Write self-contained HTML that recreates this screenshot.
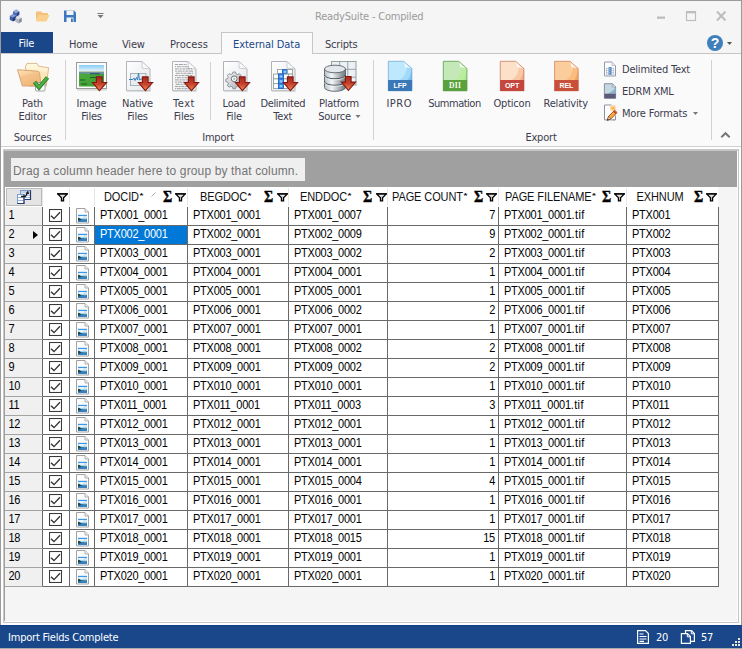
<!DOCTYPE html>
<html><head><meta charset="utf-8"><title>ReadySuite - Compiled</title>
<style>
html,body{margin:0;padding:0;}
body{width:742px;height:649px;overflow:hidden;background:#f5f5f5;position:relative;font-family:"DejaVu Sans Condensed","DejaVu Sans","Liberation Sans",sans-serif;font-size:11px;color:#3c3c4e;}
.abs{position:absolute;}
#win{position:absolute;left:0;top:0;width:740px;height:647px;border:1px solid #9b9b9b;pointer-events:none;z-index:50;}
.t{position:absolute;line-height:13px;white-space:nowrap;letter-spacing:-0.2px;}
.ct{position:absolute;line-height:13px;white-space:nowrap;text-align:center;width:100px;margin-left:-50px;letter-spacing:-0.2px;}
#title{left:315px;top:10px;color:#9a9a9a;}
#file{left:1px;top:32px;width:52px;height:22px;background:#19478a;}
#tabline{left:1px;top:53px;width:740px;height:1px;background:#c6c6c6;}
#acttab{left:221px;top:32px;width:90px;height:21px;border:1px solid #c6c6c6;border-bottom:none;background:#fafafa;height:22px;}
#ribbon{left:1px;top:54px;width:740px;height:92px;background:#fafafa;}
#ribline{left:1px;top:146px;width:740px;height:1px;background:#cfcfcf;}
.sep{position:absolute;top:60px;width:1px;height:80px;background:#d2d2d2;}
/* grid */
#formbg{left:1px;top:147px;width:740px;height:478px;background:#fff;}
#gridouter{left:3px;top:149px;width:736px;height:474px;background:#c6c6c6;}
#gridwhite{left:4px;top:151px;width:734px;height:471px;background:#fff;}
#gridinner{left:4px;top:151px;width:733px;height:470px;background:#a0a0a0;}
#gridbg{left:5px;top:187px;width:732px;height:434px;background:#f5f5f5;}
#panel{left:4px;top:151px;width:733px;height:36px;background:#a0a0a0;}
#gbox{left:11px;top:158px;width:294px;height:23px;background:#efefef;}
#gtext{left:13px;top:164px;font-family:"Liberation Sans",sans-serif;font-size:12px;color:#747474;line-height:14px;letter-spacing:0.140px;}
#hdr{left:5px;top:187px;width:713px;height:20px;background:#fff;}
.g{font-family:"Liberation Sans",sans-serif;font-size:11px;color:#000;}
.h{position:absolute;top:191px;line-height:13px;transform:scaleY(1.13);transform-origin:0 10.300px;letter-spacing:-0.1px;white-space:nowrap;font-family:"Liberation Sans",sans-serif;font-size:11px;color:#111;}
.as{font-size:10px;font-weight:bold;position:relative;top:-0.400px;left:0.500px;letter-spacing:0;line-height:13px;display:inline-block;vertical-align:top;transform:scaleY(0.700);transform-origin:0 2px;}
.s{display:inline-block;line-height:16px;transform:scaleY(1.13);transform-origin:0 11.800px;}
.sg{position:absolute;top:187.400px;font:bold 17px/20px "Liberation Serif",serif;color:#000;-webkit-text-stroke:0.400px #000;transform:scaleX(0.830);transform-origin:0 0;}
.fn{position:absolute;top:192.500px;}
.hs{position:absolute;top:188px;width:1px;height:18px;background:#e6e6e6;}
.row{position:absolute;left:5px;width:714px;height:19px;font-family:"Liberation Sans",sans-serif;font-size:11px;color:#000;}
.c{position:absolute;top:1px;height:19px;line-height:16px;box-sizing:border-box;border-right:1px solid #696969;border-bottom:1px solid #696969;background:#fff;white-space:nowrap;overflow:hidden;letter-spacing:-0.25px;padding-top:0px;}
.rh{left:0;width:38px;background:#f0f0f0;border-bottom:1px solid #a4a4a4;padding-left:3.500px;}
.ck{left:38px;width:27px;}
.ic{left:65px;width:25px;}
.c1{left:90px;width:93px;padding-left:5px;}
.c2{left:183px;width:101px;padding-left:5px;}
.c3{left:284px;width:99px;padding-left:5px;}
.c4{left:383px;width:111px;text-align:right;padding-right:3px;}
.c5{left:494px;width:128px;padding-left:5px;}
.c6{left:622px;width:92px;padding-left:5px;}
.sel{background:#0078d7;color:#fff;}
.ck svg{position:absolute;left:6px;top:2px;}
.ic svg{position:absolute;left:6px;top:1px;}
.cur{position:absolute;left:28px;top:5px;width:0;height:0;border-left:5px solid #000;border-top:4.5px solid transparent;border-bottom:4.5px solid transparent;}
#status{left:0px;top:625px;width:742px;height:23px;background:#19478a;border-top:1px solid #123f82;box-sizing:border-box;z-index:60;}
#botline{left:0;top:648px;width:742px;height:1px;background:#aaa;z-index:60;}
#status .t{color:#fff;}
</style></head>
<body>
<svg width="0" height="0" style="position:absolute">
<defs>
<linearGradient id="ra" x1="0" y1="0" x2="0" y2="1"><stop offset="0" stop-color="#a62a1e"/><stop offset="0.550" stop-color="#c8452f"/><stop offset="0.850" stop-color="#e87848"/><stop offset="1" stop-color="#f8c070"/></linearGradient>
<linearGradient id="pg" x1="0" y1="0" x2="1" y2="1"><stop offset="0" stop-color="#ffffff"/><stop offset="1" stop-color="#e4e6ea"/></linearGradient>
<g id="imgdoc"><path d="M0.500 0.500 H9 L12.500 4 V15 H0.500 Z" fill="#fdfdfd" stroke="#a2a2a2"/><path d="M9 0.500 V4 H12.500" fill="#f0f0f0" stroke="#a8a8a8" stroke-width="0.900"/><rect x="2" y="6.800" width="9" height="7.200" fill="#3d96e8"/><rect x="2" y="8" width="9" height="3" fill="#c8e8f8"/><rect x="3.500" y="8.300" width="4" height="1.400" fill="#f4fbff"/><rect x="2" y="10.800" width="9" height="3.200" fill="#3480c4"/><path d="M2 9.800 L4 10.300 L5.500 12 L2 12.800 Z" fill="#24463a"/><rect x="8" y="11.200" width="2" height="0.800" fill="#6a9a7a"/></g>
<linearGradient id="fg" x1="0" y1="0" x2="0" y2="1"><stop offset="0" stop-color="#ffffff"/><stop offset="1" stop-color="#8c8c8c"/></linearGradient>
<g id="funnel"><path d="M0.800 0.900 H10.200 L6.600 4.800 V7.800 H4.400 V4.800 Z" fill="url(#fg)" stroke="#000" stroke-width="1.200"/><rect x="0.200" y="0.300" width="10.600" height="1.200" fill="#000"/></g>
<g id="arrow"><path d="M20.400 15.900 H26.100 V21.500 H30.600 L23.400 29.700 L16.400 21.500 H20.400 Z" fill="url(#ra)" stroke="#861810" stroke-width="1.100"/></g>
<g id="page"><path d="M4.5 1.5 H21 L28 8.5 V30.5 H4.5 Z" fill="url(#pg)" stroke="#b8bcc2"/><path d="M21 1.5 V8.5 H28 Z" fill="#f4f4f6" stroke="#c4c8cc" stroke-width="0.8"/></g>
</defs></svg>

<!-- title bar -->
<div class="t" id="title">ReadySuite - Compiled</div>
<svg class="abs" style="left:0;top:0" width="742" height="54" viewBox="0 0 742 54">
  <!-- app icon -->
<g><path d="M13.0 11.24 L16.2 9.18 L19.4 11.24 L16.2 13 Z" fill="#8fa8e0"/><path d="M13.0 11.24 L16.2 13 V16.8 L13.0 15.040000000000001 Z" fill="#4a68b4"/><path d="M19.4 11.24 L16.2 13 V16.8 L19.4 15.040000000000001 Z" fill="#2a4690"/><path d="M9.8 15.840000000000002 L13 13.780000000000001 L16.2 15.840000000000002 L13 17.6 Z" fill="#7e98d4"/><path d="M9.8 15.840000000000002 L13 17.6 V21.400000000000002 L9.8 19.64 Z" fill="#3c5aa6"/><path d="M16.2 15.840000000000002 L13 17.6 V21.400000000000002 L16.2 19.64 Z" fill="#22397e"/><path d="M15.400000000000002 17.84 L18.6 15.780000000000001 L21.8 17.84 L18.6 19.6 Z" fill="#dcdfe6"/><path d="M15.400000000000002 17.84 L18.6 19.6 V23.400000000000002 L15.400000000000002 21.64 Z" fill="#b4b8c2"/><path d="M21.8 17.84 L18.6 19.6 V23.400000000000002 L21.8 21.64 Z" fill="#8c909c"/></g>
  <!-- open folder -->
  <path d="M36 11.500 h5 l1.500 1.500 h5.500 v2 h-9 l-3 6 z" fill="#f6c27a"/><path d="M39 15 h10.500 l-3 6.500 h-10.500 z" fill="#fad08f"/>
  <!-- save -->
  <path d="M64 10.500 h10 l2 2 v9.500 h-12 z" fill="#3b78bf"/><rect x="66.500" y="10.500" width="7" height="4.500" fill="#f4f4f4"/><rect x="66.500" y="17.500" width="7" height="4.500" fill="#f4f4f4"/><rect x="71" y="18.500" width="1.800" height="3.500" fill="#3b78bf"/>
  <!-- qat dropdown -->
  <rect x="97.500" y="13" width="6" height="1" fill="#777"/><path d="M97.500 15 h6 l-3 3.200 z" fill="#777"/>
  <!-- window buttons -->
  <rect x="657" y="16.500" width="8" height="2.300" fill="#bdbdbd"/>
  <rect x="686.500" y="12" width="9" height="8.500" fill="none" stroke="#bdbdbd" stroke-width="1.200"/><rect x="686" y="11" width="10" height="2.300" fill="#bdbdbd"/>
  <path d="M717 11.500 l8.500 9 M725.500 11.500 l-8.500 9" stroke="#bdbdbd" stroke-width="2" fill="none"/>
  <!-- help -->
  <circle cx="715" cy="43" r="8" fill="#3f7fbc"/>
  <text x="715" y="48" text-anchor="middle" font-family="Liberation Sans, sans-serif" font-weight="bold" font-size="14" fill="#fff">?</text>
  <path d="M727 42 h5 l-2.500 3 z" fill="#555"/>
</svg>

<!-- tabs -->
<div class="abs" id="file"></div>
<div class="abs" id="tabline"></div>
<div class="abs" id="acttab"></div>
<div class="t" style="left:18.500px;top:37px;color:#fff">File</div>
<div class="t" style="left:69px;top:38px">Home</div>
<div class="t" style="left:122px;top:38px">View</div>
<div class="t" style="left:170px;top:38px;letter-spacing:0.050px">Process</div>
<div class="t" style="left:233px;top:38px;color:#19478a;letter-spacing:-0.050px">External Data</div>
<div class="t" style="left:325px;top:38px">Scripts</div>

<!-- ribbon -->
<div class="abs" id="ribbon"></div>
<div class="abs" id="ribline"></div>
<div class="sep" style="left:65px"></div>
<div class="sep" style="left:210px;top:62px;height:58px"></div>
<div class="sep" style="left:373px"></div>
<div class="sep" style="left:711px"></div>

<svg class="abs" style="left:0;top:54px" width="742" height="92" viewBox="0 54 742 92">
<defs>
<linearGradient id="fb" x1="0" y1="0" x2="0" y2="1"><stop offset="0" stop-color="#fffbe0"/><stop offset="1" stop-color="#f6d9a8"/></linearGradient>
<linearGradient id="ff" x1="0" y1="0" x2="0.600" y2="1"><stop offset="0" stop-color="#fde2b4"/><stop offset="1" stop-color="#efb678"/></linearGradient>
<linearGradient id="sky" x1="0" y1="0" x2="0" y2="1"><stop offset="0" stop-color="#86ccf6"/><stop offset="1" stop-color="#e6f3fb"/></linearGradient>
<linearGradient id="grs" x1="0" y1="0" x2="1" y2="1"><stop offset="0" stop-color="#52b040"/><stop offset="1" stop-color="#3a9a32"/></linearGradient>
<linearGradient id="cyl" x1="0" y1="0" x2="1" y2="0"><stop offset="0" stop-color="#b8c0c6"/><stop offset="0.350" stop-color="#f4f6f8"/><stop offset="1" stop-color="#6c767e"/></linearGradient>
<radialGradient id="lfp" cx="0.250" cy="0.150" r="0.950" gradientUnits="objectBoundingBox"><stop offset="0" stop-color="#bde8fd"/><stop offset="0.550" stop-color="#bde8fd"/><stop offset="0.580" stop-color="#a2d8fa"/><stop offset="0.780" stop-color="#a2d8fa"/><stop offset="0.810" stop-color="#7cc0f4"/><stop offset="1" stop-color="#7cc0f4"/></radialGradient>
<radialGradient id="dii" cx="0.250" cy="0.150" r="0.950" gradientUnits="objectBoundingBox"><stop offset="0" stop-color="#c4e8b8"/><stop offset="0.550" stop-color="#c4e8b8"/><stop offset="0.580" stop-color="#b8ee9e"/><stop offset="0.780" stop-color="#b8ee9e"/><stop offset="0.810" stop-color="#aee894"/><stop offset="1" stop-color="#aee894"/></radialGradient>
<radialGradient id="opt" cx="0.250" cy="0.150" r="0.950" gradientUnits="objectBoundingBox"><stop offset="0" stop-color="#fde0c8"/><stop offset="0.550" stop-color="#fde0c8"/><stop offset="0.580" stop-color="#f8c8a4"/><stop offset="0.780" stop-color="#f8c8a4"/><stop offset="0.810" stop-color="#f0b088"/><stop offset="1" stop-color="#f0b088"/></radialGradient>
<radialGradient id="rel" cx="0.250" cy="0.150" r="0.950" gradientUnits="objectBoundingBox"><stop offset="0" stop-color="#fbcc9c"/><stop offset="0.550" stop-color="#fbcc9c"/><stop offset="0.580" stop-color="#fcbc80"/><stop offset="0.780" stop-color="#fcbc80"/><stop offset="0.810" stop-color="#f4a860"/><stop offset="1" stop-color="#f4a860"/></radialGradient>
<linearGradient id="gear" x1="0" y1="0" x2="1" y2="1"><stop offset="0" stop-color="#f6f7f8"/><stop offset="1" stop-color="#a4aab0"/></linearGradient>
<g id="doc"><path d="M0.500 0.500 H15.800 L24 7.800 V29.700 H0.500 Z" fill="url(#pg)" stroke="#b0b4ba"/><path d="M15.800 0.500 L16.300 7.300 L24 7.800 Z" fill="#fbfbfc" stroke="#c0c4c8" stroke-width="0.800"/><path d="M1 30.300 H24.500" stroke="#d8d8d8" stroke-width="1"/></g>
<g id="xdoc"><path d="M0.300 0.300 H15.700 L23.900 7.500 V29.800 H0.300 Z"/></g>
</defs>
<!-- Path editor -->
<path d="M25.300 67 L27 63.400 H37 L38.500 66.200 L48.600 67.800 L46.300 86 H29 Z" fill="url(#fb)" stroke="#dca878" stroke-width="0.800"/>
<path d="M31 70.500 L47.300 72 L45.300 86 H31 Z" fill="#fbe6bc"/>
<path d="M17.500 69.700 L37.300 71.200 Q39.300 71.400 39.600 73.300 L41 86 H22.300 Z" fill="url(#ff)" stroke="#cf9262" stroke-width="0.800"/>
<path d="M20 76 L36 72 L39.500 74 L40.500 82 L24 86 L22.500 86 Z" fill="#f2b87c" opacity="0.450"/>
<rect x="35.500" y="82.500" width="9.500" height="8.500" rx="1" fill="#fff" stroke="#8a8a8a" stroke-width="0.800"/>
<path d="M34.500 82 L39 87.500 L47.500 77.500" fill="none" stroke="#2c7a28" stroke-width="4.200" stroke-linejoin="miter"/>
<path d="M34.800 82.200 L39 87.300 L47.300 77.700" fill="none" stroke="#4cae44" stroke-width="2.600" stroke-linejoin="miter"/>
<!-- Image files -->
<rect x="77" y="89" width="30" height="1.800" fill="#dedede"/>
<rect x="76.500" y="62.500" width="30" height="26" fill="#fcfcfc" stroke="#9a9a9a"/>
<rect x="79" y="65" width="25" height="21.500" fill="url(#grs)"/>
<rect x="79" y="65" width="25" height="6.500" fill="url(#sky)"/>
<rect x="79" y="71.300" width="25" height="1" fill="#cfcdbe"/><path d="M79 72.300 H104 V74 L92 74 L79 73.500 Z" fill="#6c8eaa"/><path d="M90 73.300 H100 V74.300 H90 Z" fill="#2c4a7a"/>
<path d="M80 80 h5 M81 84 h6 M90 77.500 h6" stroke="#1e5a22" stroke-width="1"/>
<use href="#arrow" x="76" y="61"/>
<!-- Native files -->
<use href="#doc" x="126" y="61"/>
<rect x="130.500" y="73.500" width="15.500" height="12" fill="#e6eef0" stroke="#a8b4b8"/>
<path d="M129 79.500 H133 L134 78 L135 80.500 L136.500 77.500 L137.500 80 L138.500 73 L139.500 80 L141 79 H146" fill="none" stroke="#3a80c4" stroke-width="1"/>
<use href="#arrow" x="122" y="61"/>
<!-- Text files -->
<use href="#doc" x="172" y="61"/>
<g stroke="#8c8c8c" stroke-width="0.800" stroke-dasharray="3 0.800 4 0.800 2 0.800">
<path d="M175 64.500 H187"/><path d="M175 66.700 H189" stroke-dashoffset="2"/><path d="M175 68.900 H192" stroke-dashoffset="4"/><path d="M175 71.100 H193" stroke-dashoffset="1"/><path d="M175 73.300 H193" stroke-dashoffset="3"/><path d="M175 75.500 H193" stroke-dashoffset="5"/><path d="M175 77.700 H190" stroke-dashoffset="2"/><path d="M175 79.900 H193" stroke-dashoffset="4"/><path d="M175 82.100 H193" stroke-dashoffset="1"/><path d="M175 84.300 H193" stroke-dashoffset="3"/><path d="M175 86.500 H193" stroke-dashoffset="5"/><path d="M175 88.700 H190" stroke-dashoffset="2"/>
</g>
<use href="#arrow" x="168" y="61"/>
<!-- Load file -->
<use href="#doc" x="223" y="61"/>
<g transform="translate(234.200 78.800) scale(0.800)">
<path d="M-1.600 -8.500 h3.200 l0.600 2.300 l2 0.900 l2.100 -1.200 l2.200 2.200 l-1.200 2.100 l0.900 2 l2.300 0.600 v3.200 l-2.300 0.600 l-0.900 2 l1.200 2.100 l-2.200 2.200 l-2.100 -1.200 l-2 0.900 l-0.600 2.300 h-3.200 l-0.600 -2.300 l-2 -0.900 l-2.100 1.200 l-2.200 -2.200 l1.200 -2.100 l-0.900 -2 l-2.300 -0.600 v-3.200 l2.300 -0.600 l0.900 -2 l-1.200 -2.100 l2.200 -2.200 l2.100 1.200 l2 -0.900 z" fill="url(#gear)" stroke="#7c838a" stroke-width="1"/>
<circle r="3.600" fill="#fdfdfd" stroke="#5c6268" stroke-width="1.100"/><circle r="1.500" fill="#b8bec4"/>
</g>
<use href="#arrow" x="219" y="61"/>
<!-- Delimited text -->
<use href="#doc" x="271" y="61"/>
<rect x="277.5" y="69.5" width="5" height="4.6" fill="#fff" stroke="#93a29e" stroke-width="0.900"/>
<rect x="277.5" y="74.1" width="5" height="4.8" fill="#fff" stroke="#93a29e" stroke-width="0.900"/>
<rect x="282.5" y="69.5" width="5" height="4.6" fill="#3f8ee8" stroke="#2468c0" stroke-width="0.900"/><rect x="283.8" y="70.8" width="2.4" height="2.0" fill="#8ccafc"/>
<rect x="282.5" y="74.1" width="5" height="4.8" fill="#3f8ee8" stroke="#2468c0" stroke-width="0.900"/><rect x="283.8" y="75.39999999999999" width="2.4" height="2.2" fill="#8ccafc"/>
<rect x="287.5" y="69.5" width="5" height="4.6" fill="#fff" stroke="#93a29e" stroke-width="0.900"/>
<rect x="287.5" y="74.1" width="5" height="4.8" fill="#fff" stroke="#93a29e" stroke-width="0.900"/>
<rect x="273.5" y="74.1" width="5" height="4.8" fill="#fff" stroke="#93a29e" stroke-width="0.900"/>
<rect x="278.5" y="74.1" width="5" height="4.8" fill="#3f8ee8" stroke="#2468c0" stroke-width="0.900"/><rect x="279.8" y="75.39999999999999" width="2.4" height="2.2" fill="#8ccafc"/>
<rect x="283.5" y="74.1" width="5" height="4.8" fill="#fff" stroke="#93a29e" stroke-width="0.900"/>
<rect x="273.5" y="78.9" width="5" height="4.8" fill="#fff" stroke="#93a29e" stroke-width="0.900"/>
<rect x="278.5" y="78.9" width="5" height="4.8" fill="#3f8ee8" stroke="#2468c0" stroke-width="0.900"/><rect x="279.8" y="80.2" width="2.4" height="2.2" fill="#8ccafc"/>
<rect x="283.5" y="78.9" width="5" height="4.8" fill="#fff" stroke="#93a29e" stroke-width="0.900"/>
<rect x="273.5" y="83.7" width="5" height="4.8" fill="#fff" stroke="#93a29e" stroke-width="0.900"/>
<rect x="278.5" y="83.7" width="5" height="4.8" fill="#3f8ee8" stroke="#2468c0" stroke-width="0.900"/><rect x="279.8" y="85.0" width="2.4" height="2.2" fill="#8ccafc"/>
<rect x="283.5" y="83.7" width="5" height="4.8" fill="#fff" stroke="#93a29e" stroke-width="0.900"/>
<rect x="278.5" y="74.1" width="5" height="4.8" fill="#3f8ee8" stroke="#2468c0" stroke-width="0.900"/><rect x="279.8" y="75.39999999999999" width="2.4" height="2.2" fill="#8ccafc"/>
<rect x="278.5" y="78.9" width="5" height="4.8" fill="#3f8ee8" stroke="#2468c0" stroke-width="0.900"/><rect x="279.8" y="80.2" width="2.4" height="2.2" fill="#8ccafc"/>
<rect x="278.5" y="83.7" width="5" height="4.8" fill="#3f8ee8" stroke="#2468c0" stroke-width="0.900"/><rect x="279.8" y="85.0" width="2.4" height="2.2" fill="#8ccafc"/>
<use href="#arrow" x="267" y="61"/>
<!-- Platform source -->
<rect x="331.500" y="61.500" width="24.500" height="23.500" fill="#eef0f8" stroke="#94a49c"/>
<path d="M339.700 61.500 V85 M347.800 61.500 V85 M331.500 69.300 H356 M331.500 77.200 H356" stroke="#94a49c" stroke-width="1"/>
<path d="M324.500 69 V87.500 A10.500 3.800 0 0 0 345.500 87.500 V69 Z" fill="url(#cyl)" stroke="#5a646c" stroke-width="0.900"/>
<ellipse cx="335" cy="69" rx="10.500" ry="3.800" fill="#e4e8ec" stroke="#5a646c" stroke-width="0.900"/>
<path d="M324.500 75 A10.500 3.800 0 0 0 345.500 75 M324.500 81.500 A10.500 3.800 0 0 0 345.500 81.500" fill="none" stroke="#4a545c" stroke-width="1.100"/>
<path d="M324.500 76 A10.500 3.800 0 0 0 345.500 76 M324.500 82.500 A10.500 3.800 0 0 0 345.500 82.500" fill="none" stroke="#f4f6f8" stroke-width="0.700"/>
<use href="#arrow" x="325" y="60.600"/>
<!-- export docs -->
<g transform="translate(388 61)"><use href="#xdoc" fill="url(#lfp)" stroke="#5a96c8" stroke-width="0.600"/><path d="M0.100 19 H24.100 V30 H0.100 Z" fill="#3a78b8"/><path d="M16.200 1.500 L17 6.300 L22.500 7 Z" fill="#eef8ff"/><text x="12.100" y="26.700" text-anchor="middle" font-family="Liberation Sans, sans-serif" font-weight="bold" font-size="7" fill="#fff">LFP</text></g>
<g transform="translate(443 61)"><use href="#xdoc" fill="url(#dii)" stroke="#5c9c48" stroke-width="0.800"/><path d="M0.100 19 H24.100 V30 H0.100 Z" fill="#5aa03c"/><path d="M16.200 1.500 L17 6.300 L22.500 7 Z" fill="#f4fcee"/><text x="12.100" y="26.700" text-anchor="middle" font-family="Liberation Serif, serif" font-weight="bold" font-size="7.600" letter-spacing="0.300" fill="#f6fff2">DII</text></g>
<g transform="translate(500 61)"><use href="#xdoc" fill="url(#opt)" stroke="#c4705c" stroke-width="0.700"/><path d="M0.100 19 H24.100 V30 H0.100 Z" fill="#c4463c"/><path d="M16.200 1.500 L17 6.300 L22.500 7 Z" fill="#fff6f0"/><text x="12.100" y="26.700" text-anchor="middle" font-family="Liberation Sans, sans-serif" font-weight="bold" font-size="7" fill="#fff">OPT</text></g>
<g transform="translate(554.300 61)"><use href="#xdoc" fill="url(#rel)" stroke="#c87850" stroke-width="0.700"/><path d="M0.100 19 H24.100 V30 H0.100 Z" fill="#c8503a"/><path d="M16.200 1.500 L17 6.300 L22.500 7 Z" fill="#fff4e8"/><text x="12.100" y="26.700" text-anchor="middle" font-family="Liberation Sans, sans-serif" font-weight="bold" font-size="7" fill="#fff">REL</text></g>
<!-- small icons -->
<g transform="translate(604 61.500)"><path d="M0.500 0.500 H8 L11.500 4 V14.500 H0.500 Z" fill="#fff" stroke="#9498ac"/><path d="M8 0.500 V4 H11.500" fill="#f0f0f4" stroke="#b0b4c4" stroke-width="0.800"/><rect x="2.300" y="6.500" width="7.400" height="6.800" fill="#fff"/><rect x="4.700" y="5.500" width="2.800" height="7.800" fill="#3a8ae4"/><path d="M2.300 6.800 h7.400 M2.300 9 h7.400 M2.300 11.200 h7.400 M2.300 13.300 h7.400 M2.500 6.500 v6.800 M4.700 5.500 v7.800 M7.500 5.500 v7.800 M9.700 6.500 v6.800" stroke="#9aa8b4" stroke-width="0.600"/><path d="M5.300 6 v7" stroke="#bfe0ff" stroke-width="0.600" stroke-dasharray="1 1.200"/></g>
<g transform="translate(604 83.300)"><path d="M0.400 0.400 H8.300 L11.600 3.700 V15 H0.400 Z" fill="#c4d8e2" stroke="#747a90" stroke-width="0.800"/><path d="M11.600 4 V10.500 H3 C7 9.500 9 7 11.600 4 Z" fill="#8eb4cc"/><path d="M0.400 10.400 H11.600 V15 H0.400 Z" fill="#5c5a78"/><path d="M8.300 0.400 V3.700 H11.600 Z" fill="#e8f0f4" stroke="#747a90" stroke-width="0.500"/></g>
<g transform="translate(604 104.500)"><path d="M10.500 15.400 H0.500 V0.500 H7.500" fill="#fff" stroke="#8c90a4"/><path d="M11.500 11 V15.400 H9" fill="none" stroke="#8c90a4"/><circle cx="9" cy="3.600" r="3.200" fill="#fbd9a4"/><circle cx="9" cy="3.600" r="1.600" fill="#f9b45c"/><path d="M3.300 15.800 L4.600 11.800 L10.600 5.800 L13 8 L7 14.300 Z" fill="#f2b23c" stroke="#a2341c" stroke-width="0.900"/><path d="M9.600 6.800 L12 9.100" stroke="#c03a24" stroke-width="1.400"/><path d="M3.300 15.800 L4.600 11.800 L7 14.300 Z" fill="#f6dcb0" stroke="#6a3a1a" stroke-width="0.600"/><path d="M3.300 15.800 L3.800 14.300 L4.800 15.300 Z" fill="#222"/></g>
<!-- dropdown arrows -->
<path d="M355.500 115 h5 l-2.500 3 z" fill="#777"/>
<path d="M693 112 h5 l-2.500 3 z" fill="#777"/>
<!-- collapse chevron -->
<path d="M721.300 137.300 L725.500 133.200 L729.700 137.300" fill="none" stroke="#777" stroke-width="1.900"/>

</svg>

<div class="ct" style="left:32.500px;top:97px">Path<br>Editor</div>
<div class="ct" style="left:91.500px;top:97px">Image<br>Files</div>
<div class="ct" style="left:137.500px;top:97px">Native<br>Files</div>
<div class="ct" style="left:184px;top:97px"><span style="letter-spacing:0.500px">Text</span><br>Files</div>
<div class="ct" style="left:234px;top:97px">Load<br>File</div>
<div class="ct" style="left:282.800px;top:97px"><span style="letter-spacing:-0.350px">Delimited</span><br>Text</div>
<div class="ct" style="left:339px;top:97px">Platform<br>Source <span style="display:inline-block;width:6px"></span></div>
<div class="ct" style="left:399.200px;top:97px;letter-spacing:0.500px">IPRO</div>
<div class="ct" style="left:454.500px;top:97px;letter-spacing:-0.500px">Summation</div>
<div class="ct" style="left:512px;top:97px">Opticon</div>
<div class="ct" style="left:565.700px;top:97px">Relativity</div>
<div class="t" style="left:622px;top:63px">Delimited Text</div>
<div class="t" style="left:622px;top:85px">EDRM XML</div>
<div class="t" style="left:622px;top:107px">More Formats</div>
<div class="ct" style="left:32.500px;top:131px">Sources</div>
<div class="ct" style="left:218px;top:131px">Import</div>
<div class="ct" style="left:541px;top:131px">Export</div>

<!-- grid -->
<div class="abs" id="formbg"></div>
<div class="abs" id="gridouter"></div>
<div class="abs" id="gridwhite"></div>
<div class="abs" id="gridinner"></div>
<div class="abs" id="gridbg"></div>
<div class="abs" id="panel"></div>
<div class="abs" id="gbox"></div>
<div class="abs" id="gtext">Drag a column header here to group by that column.</div>
<div class="abs" id="hdr"></div>
<div class="abs" style="left:6px;top:188px;width:35px;height:17px;background:#e4e4e4;border:1px solid #b8bcc0;box-sizing:border-box;width:36px;height:18px;"></div>
<svg class="abs" style="left:16px;top:188px" width="18" height="18" viewBox="16 188 18 18">
 <rect x="20.500" y="190.500" width="10" height="9" fill="#fff" stroke="#7a9ed2"/><rect x="21" y="191" width="9" height="2.600" fill="#c4d4e6"/>
 <path d="M21 195.300 h9 M21 197.600 h9" stroke="#9abce0" stroke-width="0.900"/>
 <path d="M30.500 190.200 V199.500 H24.500" fill="none" stroke="#28386e" stroke-width="1.200"/>
 <rect x="17.500" y="194.500" width="6.500" height="9" fill="#fff" stroke="#7a9ed2"/>
 <path d="M18 197.500 h5.500 M18 200.500 h5.500" stroke="#8ab0dc" stroke-width="0.900"/>
 <path d="M24 194.500 V203.500 H17.300" fill="none" stroke="#28386e" stroke-width="1.200"/>
 <path d="M21 196.500 H25.300 L27.600 192.800" fill="none" stroke="#1c1c1c" stroke-width="1.300"/>
 <path d="M25.600 193.600 L28 190.600 L29.200 194.300 Z" fill="#1c1c1c"/>
</svg>
<div class="hs" style="left:42px"></div><div class="hs" style="left:69px"></div><div class="hs" style="left:94px"></div><div class="hs" style="left:187px"></div><div class="hs" style="left:288px"></div><div class="hs" style="left:387px"></div><div class="hs" style="left:498px"></div><div class="hs" style="left:626px"></div>
<div class="h" style="left:104px">DOCID<span class="as">*</span></div>
<div class="h" style="left:200px">BEGDOC<span class="as">*</span></div>
<div class="h" style="left:300px">ENDDOC<span class="as">*</span></div>
<div class="h" style="left:392px">PAGE COUNT<span class="as">*</span></div>
<div class="h" style="left:505px">PAGE FILENAME<span class="as">*</span></div>
<div class="h" style="left:636.500px">EXHNUM</div>
<div class="abs" style="left:151px;top:192px;width:5px;height:5px;overflow:hidden"><svg width="5" height="5" viewBox="0 0 5 5" style="display:block"><path d="M0.500 4.500 L4.500 0.500" stroke="#b0b0b0" stroke-width="1"/></svg></div>
<div class="sg" style="left:162.500px">Σ</div>
<div class="sg" style="left:264px">Σ</div>
<div class="sg" style="left:363px">Σ</div>
<div class="sg" style="left:474px">Σ</div>
<div class="sg" style="left:601.500px">Σ</div>
<div class="sg" style="left:693.500px">Σ</div>
<svg class="fn" style="left:57px" width="11" height="9" viewBox="0 0 11 9"><use href="#funnel"/></svg>
<svg class="fn" style="left:175px" width="11" height="9" viewBox="0 0 11 9"><use href="#funnel"/></svg>
<svg class="fn" style="left:276.500px" width="11" height="9" viewBox="0 0 11 9"><use href="#funnel"/></svg>
<svg class="fn" style="left:375.500px" width="11" height="9" viewBox="0 0 11 9"><use href="#funnel"/></svg>
<svg class="fn" style="left:486px" width="11" height="9" viewBox="0 0 11 9"><use href="#funnel"/></svg>
<svg class="fn" style="left:614px" width="11" height="9" viewBox="0 0 11 9"><use href="#funnel"/></svg>
<svg class="fn" style="left:706px" width="11" height="9" viewBox="0 0 11 9"><use href="#funnel"/></svg>

<div class="row" style="top:206px">
<div class="c rh"><span class=s>1</span></div>
<div class="c ck"><svg width="13" height="13" viewBox="0 0 13 13"><rect x="0.5" y="0.5" width="12" height="12" fill="#fff" stroke="#3a3a3a" stroke-width="1.100"/><path d="M2 6.800 L5 9.600 L11 3.300" fill="none" stroke="#333" stroke-width="1.350"/></svg></div>
<div class="c ic"><svg width="14" height="16" viewBox="0 0 14 16"><use href="#imgdoc"/></svg></div>
<div class="c c1"><span class=s>PTX001_0001</span></div>
<div class="c c2"><span class=s>PTX001_0001</span></div>
<div class="c c3"><span class=s>PTX001_0007</span></div>
<div class="c c4"><span class=s>7</span></div>
<div class="c c5"><span class=s>PTX001_0001<span style='letter-spacing:0.350px'>.tif</span></span></div>
<div class="c c6"><span class=s>PTX001</span></div>
</div>
<div class="row" style="top:225px">
<div class="c rh"><span class=s>2</span><i class=cur></i></div>
<div class="c ck"><svg width="13" height="13" viewBox="0 0 13 13"><rect x="0.5" y="0.5" width="12" height="12" fill="#fff" stroke="#3a3a3a" stroke-width="1.100"/><path d="M2 6.800 L5 9.600 L11 3.300" fill="none" stroke="#333" stroke-width="1.350"/></svg></div>
<div class="c ic"><svg width="14" height="16" viewBox="0 0 14 16"><use href="#imgdoc"/></svg></div>
<div class="c c1 sel"><span class=s>PTX002_0001</span></div>
<div class="c c2"><span class=s>PTX002_0001</span></div>
<div class="c c3"><span class=s>PTX002_0009</span></div>
<div class="c c4"><span class=s>9</span></div>
<div class="c c5"><span class=s>PTX002_0001<span style='letter-spacing:0.350px'>.tif</span></span></div>
<div class="c c6"><span class=s>PTX002</span></div>
</div>
<div class="row" style="top:244px">
<div class="c rh"><span class=s>3</span></div>
<div class="c ck"><svg width="13" height="13" viewBox="0 0 13 13"><rect x="0.5" y="0.5" width="12" height="12" fill="#fff" stroke="#3a3a3a" stroke-width="1.100"/><path d="M2 6.800 L5 9.600 L11 3.300" fill="none" stroke="#333" stroke-width="1.350"/></svg></div>
<div class="c ic"><svg width="14" height="16" viewBox="0 0 14 16"><use href="#imgdoc"/></svg></div>
<div class="c c1"><span class=s>PTX003_0001</span></div>
<div class="c c2"><span class=s>PTX003_0001</span></div>
<div class="c c3"><span class=s>PTX003_0002</span></div>
<div class="c c4"><span class=s>2</span></div>
<div class="c c5"><span class=s>PTX003_0001<span style='letter-spacing:0.350px'>.tif</span></span></div>
<div class="c c6"><span class=s>PTX003</span></div>
</div>
<div class="row" style="top:263px">
<div class="c rh"><span class=s>4</span></div>
<div class="c ck"><svg width="13" height="13" viewBox="0 0 13 13"><rect x="0.5" y="0.5" width="12" height="12" fill="#fff" stroke="#3a3a3a" stroke-width="1.100"/><path d="M2 6.800 L5 9.600 L11 3.300" fill="none" stroke="#333" stroke-width="1.350"/></svg></div>
<div class="c ic"><svg width="14" height="16" viewBox="0 0 14 16"><use href="#imgdoc"/></svg></div>
<div class="c c1"><span class=s>PTX004_0001</span></div>
<div class="c c2"><span class=s>PTX004_0001</span></div>
<div class="c c3"><span class=s>PTX004_0001</span></div>
<div class="c c4"><span class=s>1</span></div>
<div class="c c5"><span class=s>PTX004_0001<span style='letter-spacing:0.350px'>.tif</span></span></div>
<div class="c c6"><span class=s>PTX004</span></div>
</div>
<div class="row" style="top:282px">
<div class="c rh"><span class=s>5</span></div>
<div class="c ck"><svg width="13" height="13" viewBox="0 0 13 13"><rect x="0.5" y="0.5" width="12" height="12" fill="#fff" stroke="#3a3a3a" stroke-width="1.100"/><path d="M2 6.800 L5 9.600 L11 3.300" fill="none" stroke="#333" stroke-width="1.350"/></svg></div>
<div class="c ic"><svg width="14" height="16" viewBox="0 0 14 16"><use href="#imgdoc"/></svg></div>
<div class="c c1"><span class=s>PTX005_0001</span></div>
<div class="c c2"><span class=s>PTX005_0001</span></div>
<div class="c c3"><span class=s>PTX005_0001</span></div>
<div class="c c4"><span class=s>1</span></div>
<div class="c c5"><span class=s>PTX005_0001<span style='letter-spacing:0.350px'>.tif</span></span></div>
<div class="c c6"><span class=s>PTX005</span></div>
</div>
<div class="row" style="top:301px">
<div class="c rh"><span class=s>6</span></div>
<div class="c ck"><svg width="13" height="13" viewBox="0 0 13 13"><rect x="0.5" y="0.5" width="12" height="12" fill="#fff" stroke="#3a3a3a" stroke-width="1.100"/><path d="M2 6.800 L5 9.600 L11 3.300" fill="none" stroke="#333" stroke-width="1.350"/></svg></div>
<div class="c ic"><svg width="14" height="16" viewBox="0 0 14 16"><use href="#imgdoc"/></svg></div>
<div class="c c1"><span class=s>PTX006_0001</span></div>
<div class="c c2"><span class=s>PTX006_0001</span></div>
<div class="c c3"><span class=s>PTX006_0002</span></div>
<div class="c c4"><span class=s>2</span></div>
<div class="c c5"><span class=s>PTX006_0001<span style='letter-spacing:0.350px'>.tif</span></span></div>
<div class="c c6"><span class=s>PTX006</span></div>
</div>
<div class="row" style="top:320px">
<div class="c rh"><span class=s>7</span></div>
<div class="c ck"><svg width="13" height="13" viewBox="0 0 13 13"><rect x="0.5" y="0.5" width="12" height="12" fill="#fff" stroke="#3a3a3a" stroke-width="1.100"/><path d="M2 6.800 L5 9.600 L11 3.300" fill="none" stroke="#333" stroke-width="1.350"/></svg></div>
<div class="c ic"><svg width="14" height="16" viewBox="0 0 14 16"><use href="#imgdoc"/></svg></div>
<div class="c c1"><span class=s>PTX007_0001</span></div>
<div class="c c2"><span class=s>PTX007_0001</span></div>
<div class="c c3"><span class=s>PTX007_0001</span></div>
<div class="c c4"><span class=s>1</span></div>
<div class="c c5"><span class=s>PTX007_0001<span style='letter-spacing:0.350px'>.tif</span></span></div>
<div class="c c6"><span class=s>PTX007</span></div>
</div>
<div class="row" style="top:339px">
<div class="c rh"><span class=s>8</span></div>
<div class="c ck"><svg width="13" height="13" viewBox="0 0 13 13"><rect x="0.5" y="0.5" width="12" height="12" fill="#fff" stroke="#3a3a3a" stroke-width="1.100"/><path d="M2 6.800 L5 9.600 L11 3.300" fill="none" stroke="#333" stroke-width="1.350"/></svg></div>
<div class="c ic"><svg width="14" height="16" viewBox="0 0 14 16"><use href="#imgdoc"/></svg></div>
<div class="c c1"><span class=s>PTX008_0001</span></div>
<div class="c c2"><span class=s>PTX008_0001</span></div>
<div class="c c3"><span class=s>PTX008_0002</span></div>
<div class="c c4"><span class=s>2</span></div>
<div class="c c5"><span class=s>PTX008_0001<span style='letter-spacing:0.350px'>.tif</span></span></div>
<div class="c c6"><span class=s>PTX008</span></div>
</div>
<div class="row" style="top:358px">
<div class="c rh"><span class=s>9</span></div>
<div class="c ck"><svg width="13" height="13" viewBox="0 0 13 13"><rect x="0.5" y="0.5" width="12" height="12" fill="#fff" stroke="#3a3a3a" stroke-width="1.100"/><path d="M2 6.800 L5 9.600 L11 3.300" fill="none" stroke="#333" stroke-width="1.350"/></svg></div>
<div class="c ic"><svg width="14" height="16" viewBox="0 0 14 16"><use href="#imgdoc"/></svg></div>
<div class="c c1"><span class=s>PTX009_0001</span></div>
<div class="c c2"><span class=s>PTX009_0001</span></div>
<div class="c c3"><span class=s>PTX009_0002</span></div>
<div class="c c4"><span class=s>2</span></div>
<div class="c c5"><span class=s>PTX009_0001<span style='letter-spacing:0.350px'>.tif</span></span></div>
<div class="c c6"><span class=s>PTX009</span></div>
</div>
<div class="row" style="top:377px">
<div class="c rh"><span class=s>10</span></div>
<div class="c ck"><svg width="13" height="13" viewBox="0 0 13 13"><rect x="0.5" y="0.5" width="12" height="12" fill="#fff" stroke="#3a3a3a" stroke-width="1.100"/><path d="M2 6.800 L5 9.600 L11 3.300" fill="none" stroke="#333" stroke-width="1.350"/></svg></div>
<div class="c ic"><svg width="14" height="16" viewBox="0 0 14 16"><use href="#imgdoc"/></svg></div>
<div class="c c1"><span class=s>PTX010_0001</span></div>
<div class="c c2"><span class=s>PTX010_0001</span></div>
<div class="c c3"><span class=s>PTX010_0001</span></div>
<div class="c c4"><span class=s>1</span></div>
<div class="c c5"><span class=s>PTX010_0001<span style='letter-spacing:0.350px'>.tif</span></span></div>
<div class="c c6"><span class=s>PTX010</span></div>
</div>
<div class="row" style="top:396px">
<div class="c rh"><span class=s>11</span></div>
<div class="c ck"><svg width="13" height="13" viewBox="0 0 13 13"><rect x="0.5" y="0.5" width="12" height="12" fill="#fff" stroke="#3a3a3a" stroke-width="1.100"/><path d="M2 6.800 L5 9.600 L11 3.300" fill="none" stroke="#333" stroke-width="1.350"/></svg></div>
<div class="c ic"><svg width="14" height="16" viewBox="0 0 14 16"><use href="#imgdoc"/></svg></div>
<div class="c c1"><span class=s>PTX011_0001</span></div>
<div class="c c2"><span class=s>PTX011_0001</span></div>
<div class="c c3"><span class=s>PTX011_0003</span></div>
<div class="c c4"><span class=s>3</span></div>
<div class="c c5"><span class=s>PTX011_0001<span style='letter-spacing:0.350px'>.tif</span></span></div>
<div class="c c6"><span class=s>PTX011</span></div>
</div>
<div class="row" style="top:415px">
<div class="c rh"><span class=s>12</span></div>
<div class="c ck"><svg width="13" height="13" viewBox="0 0 13 13"><rect x="0.5" y="0.5" width="12" height="12" fill="#fff" stroke="#3a3a3a" stroke-width="1.100"/><path d="M2 6.800 L5 9.600 L11 3.300" fill="none" stroke="#333" stroke-width="1.350"/></svg></div>
<div class="c ic"><svg width="14" height="16" viewBox="0 0 14 16"><use href="#imgdoc"/></svg></div>
<div class="c c1"><span class=s>PTX012_0001</span></div>
<div class="c c2"><span class=s>PTX012_0001</span></div>
<div class="c c3"><span class=s>PTX012_0001</span></div>
<div class="c c4"><span class=s>1</span></div>
<div class="c c5"><span class=s>PTX012_0001<span style='letter-spacing:0.350px'>.tif</span></span></div>
<div class="c c6"><span class=s>PTX012</span></div>
</div>
<div class="row" style="top:434px">
<div class="c rh"><span class=s>13</span></div>
<div class="c ck"><svg width="13" height="13" viewBox="0 0 13 13"><rect x="0.5" y="0.5" width="12" height="12" fill="#fff" stroke="#3a3a3a" stroke-width="1.100"/><path d="M2 6.800 L5 9.600 L11 3.300" fill="none" stroke="#333" stroke-width="1.350"/></svg></div>
<div class="c ic"><svg width="14" height="16" viewBox="0 0 14 16"><use href="#imgdoc"/></svg></div>
<div class="c c1"><span class=s>PTX013_0001</span></div>
<div class="c c2"><span class=s>PTX013_0001</span></div>
<div class="c c3"><span class=s>PTX013_0001</span></div>
<div class="c c4"><span class=s>1</span></div>
<div class="c c5"><span class=s>PTX013_0001<span style='letter-spacing:0.350px'>.tif</span></span></div>
<div class="c c6"><span class=s>PTX013</span></div>
</div>
<div class="row" style="top:453px">
<div class="c rh"><span class=s>14</span></div>
<div class="c ck"><svg width="13" height="13" viewBox="0 0 13 13"><rect x="0.5" y="0.5" width="12" height="12" fill="#fff" stroke="#3a3a3a" stroke-width="1.100"/><path d="M2 6.800 L5 9.600 L11 3.300" fill="none" stroke="#333" stroke-width="1.350"/></svg></div>
<div class="c ic"><svg width="14" height="16" viewBox="0 0 14 16"><use href="#imgdoc"/></svg></div>
<div class="c c1"><span class=s>PTX014_0001</span></div>
<div class="c c2"><span class=s>PTX014_0001</span></div>
<div class="c c3"><span class=s>PTX014_0001</span></div>
<div class="c c4"><span class=s>1</span></div>
<div class="c c5"><span class=s>PTX014_0001<span style='letter-spacing:0.350px'>.tif</span></span></div>
<div class="c c6"><span class=s>PTX014</span></div>
</div>
<div class="row" style="top:472px">
<div class="c rh"><span class=s>15</span></div>
<div class="c ck"><svg width="13" height="13" viewBox="0 0 13 13"><rect x="0.5" y="0.5" width="12" height="12" fill="#fff" stroke="#3a3a3a" stroke-width="1.100"/><path d="M2 6.800 L5 9.600 L11 3.300" fill="none" stroke="#333" stroke-width="1.350"/></svg></div>
<div class="c ic"><svg width="14" height="16" viewBox="0 0 14 16"><use href="#imgdoc"/></svg></div>
<div class="c c1"><span class=s>PTX015_0001</span></div>
<div class="c c2"><span class=s>PTX015_0001</span></div>
<div class="c c3"><span class=s>PTX015_0004</span></div>
<div class="c c4"><span class=s>4</span></div>
<div class="c c5"><span class=s>PTX015_0001<span style='letter-spacing:0.350px'>.tif</span></span></div>
<div class="c c6"><span class=s>PTX015</span></div>
</div>
<div class="row" style="top:491px">
<div class="c rh"><span class=s>16</span></div>
<div class="c ck"><svg width="13" height="13" viewBox="0 0 13 13"><rect x="0.5" y="0.5" width="12" height="12" fill="#fff" stroke="#3a3a3a" stroke-width="1.100"/><path d="M2 6.800 L5 9.600 L11 3.300" fill="none" stroke="#333" stroke-width="1.350"/></svg></div>
<div class="c ic"><svg width="14" height="16" viewBox="0 0 14 16"><use href="#imgdoc"/></svg></div>
<div class="c c1"><span class=s>PTX016_0001</span></div>
<div class="c c2"><span class=s>PTX016_0001</span></div>
<div class="c c3"><span class=s>PTX016_0001</span></div>
<div class="c c4"><span class=s>1</span></div>
<div class="c c5"><span class=s>PTX016_0001<span style='letter-spacing:0.350px'>.tif</span></span></div>
<div class="c c6"><span class=s>PTX016</span></div>
</div>
<div class="row" style="top:510px">
<div class="c rh"><span class=s>17</span></div>
<div class="c ck"><svg width="13" height="13" viewBox="0 0 13 13"><rect x="0.5" y="0.5" width="12" height="12" fill="#fff" stroke="#3a3a3a" stroke-width="1.100"/><path d="M2 6.800 L5 9.600 L11 3.300" fill="none" stroke="#333" stroke-width="1.350"/></svg></div>
<div class="c ic"><svg width="14" height="16" viewBox="0 0 14 16"><use href="#imgdoc"/></svg></div>
<div class="c c1"><span class=s>PTX017_0001</span></div>
<div class="c c2"><span class=s>PTX017_0001</span></div>
<div class="c c3"><span class=s>PTX017_0001</span></div>
<div class="c c4"><span class=s>1</span></div>
<div class="c c5"><span class=s>PTX017_0001<span style='letter-spacing:0.350px'>.tif</span></span></div>
<div class="c c6"><span class=s>PTX017</span></div>
</div>
<div class="row" style="top:529px">
<div class="c rh"><span class=s>18</span></div>
<div class="c ck"><svg width="13" height="13" viewBox="0 0 13 13"><rect x="0.5" y="0.5" width="12" height="12" fill="#fff" stroke="#3a3a3a" stroke-width="1.100"/><path d="M2 6.800 L5 9.600 L11 3.300" fill="none" stroke="#333" stroke-width="1.350"/></svg></div>
<div class="c ic"><svg width="14" height="16" viewBox="0 0 14 16"><use href="#imgdoc"/></svg></div>
<div class="c c1"><span class=s>PTX018_0001</span></div>
<div class="c c2"><span class=s>PTX018_0001</span></div>
<div class="c c3"><span class=s>PTX018_0015</span></div>
<div class="c c4"><span class=s>15</span></div>
<div class="c c5"><span class=s>PTX018_0001<span style='letter-spacing:0.350px'>.tif</span></span></div>
<div class="c c6"><span class=s>PTX018</span></div>
</div>
<div class="row" style="top:548px">
<div class="c rh"><span class=s>19</span></div>
<div class="c ck"><svg width="13" height="13" viewBox="0 0 13 13"><rect x="0.5" y="0.5" width="12" height="12" fill="#fff" stroke="#3a3a3a" stroke-width="1.100"/><path d="M2 6.800 L5 9.600 L11 3.300" fill="none" stroke="#333" stroke-width="1.350"/></svg></div>
<div class="c ic"><svg width="14" height="16" viewBox="0 0 14 16"><use href="#imgdoc"/></svg></div>
<div class="c c1"><span class=s>PTX019_0001</span></div>
<div class="c c2"><span class=s>PTX019_0001</span></div>
<div class="c c3"><span class=s>PTX019_0001</span></div>
<div class="c c4"><span class=s>1</span></div>
<div class="c c5"><span class=s>PTX019_0001<span style='letter-spacing:0.350px'>.tif</span></span></div>
<div class="c c6"><span class=s>PTX019</span></div>
</div>
<div class="row" style="top:567px">
<div class="c rh"><span class=s>20</span></div>
<div class="c ck"><svg width="13" height="13" viewBox="0 0 13 13"><rect x="0.5" y="0.5" width="12" height="12" fill="#fff" stroke="#3a3a3a" stroke-width="1.100"/><path d="M2 6.800 L5 9.600 L11 3.300" fill="none" stroke="#333" stroke-width="1.350"/></svg></div>
<div class="c ic"><svg width="14" height="16" viewBox="0 0 14 16"><use href="#imgdoc"/></svg></div>
<div class="c c1"><span class=s>PTX020_0001</span></div>
<div class="c c2"><span class=s>PTX020_0001</span></div>
<div class="c c3"><span class=s>PTX020_0001</span></div>
<div class="c c4"><span class=s>1</span></div>
<div class="c c5"><span class=s>PTX020_0001<span style='letter-spacing:0.350px'>.tif</span></span></div>
<div class="c c6"><span class=s>PTX020</span></div>
</div>

<!-- status -->
<div class="abs" id="status"></div><div class="abs" id="botline"></div>
<div class="t" style="left:8px;top:630.500px;color:#fff;z-index:61">Import Fields Complete</div>
<div class="t" style="left:656px;top:630.500px;color:#fff;z-index:61">20</div>
<div class="t" style="left:701px;top:630.500px;color:#fff;z-index:61">57</div>
<svg class="abs" style="left:630px;top:625px;z-index:61" width="112" height="24" viewBox="630 625 112 24">
<path d="M637.600 630.600 H645.500 L648.400 633.500 V643.400 H637.600 Z" fill="none" stroke="#fff" stroke-width="1.200"/>
<path d="M639.500 634 H643.500 M639.500 636.500 H646.500 M639.500 639 H646.500 M639.500 641.400 H644" stroke="#fff" stroke-width="1.100"/>
<path d="M685.500 633 V630.600 H691.500 L694.400 633.500 V641.400 H691" fill="none" stroke="#fff" stroke-width="1.200"/>
<path d="M691.300 630.800 V633.800 H694.200" fill="none" stroke="#fff" stroke-width="1"/>
<path d="M681.400 633.600 H687.500 L690.400 636.500 V643.400 H681.400 Z" fill="none" stroke="#fff" stroke-width="1.200"/>
<path d="M687.300 633.800 V636.800 H690.200" fill="none" stroke="#fff" stroke-width="1"/>
<g fill="#efe6d6"><rect x="738" y="638" width="2" height="2"/><rect x="735" y="641" width="2" height="2"/><rect x="738" y="641" width="2" height="2"/><rect x="732" y="644" width="2" height="2"/><rect x="735" y="644" width="2" height="2"/><rect x="738" y="644" width="2" height="2"/></g>
</svg>

<div id="win"></div>
</body></html>
